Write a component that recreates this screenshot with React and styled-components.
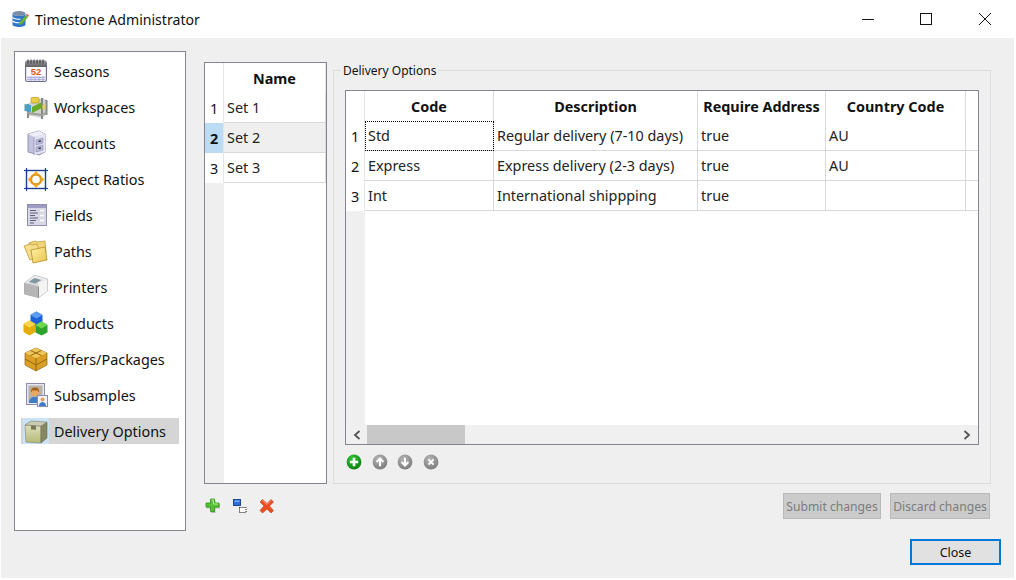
import React from "react";
import styled, { createGlobalStyle } from "styled-components";

const Global = createGlobalStyle`
  html, body { margin: 0; padding: 0; background: #fff; }
  body { font-family: "Noto Sans", "Open Sans", "Liberation Sans", sans-serif; font-size: 14.4px; color: #111; }
  * { box-sizing: border-box; }
`;

function CalendarIcon() {
  return (
    <svg width="26" height="26" viewBox="0 0 26 26">
      <defs>
        <linearGradient id="calTop" x1="0" y1="0" x2="0" y2="1">
          <stop offset="0" stopColor="#9a9a9a" />
          <stop offset="1" stopColor="#5f5f62" />
        </linearGradient>
      </defs>
      <rect x="2.5" y="3" width="21" height="20.5" rx="1.5" fill="#e3e3f2" stroke="#6f6f98" />
      <rect x="3" y="3" width="20" height="6" fill="url(#calTop)" />
      <rect x="4" y="9" width="18" height="9" fill="#fff" />
      <path d="M5 1.5v4M8 1.5v4M11 1.5v4M14 1.5v4M17 1.5v4M20 1.5v4" stroke="#333" strokeWidth="1" />
      <text x="13" y="17" textAnchor="middle" fontFamily="Liberation Sans" fontWeight="700" fontSize="9.5" fill="#e8541a">52</text>
      <path d="M4 19.5h18M4 21.5h18M8 18v5M12 18v5M16 18v5M20 18v5" stroke="#a9a9d2" strokeWidth=".8" />
    </svg>
  );
}

function WorkspaceIcon() {
  return (
    <svg width="26" height="26" viewBox="0 0 26 26">
      <path d="M4 10l15-6 5 2v14l-5 4-15-3z" fill="#cfd1cc" />
      <path d="M5 10v14M19 4v21M23.500 6v15" stroke="#858883" strokeWidth="2" />
      <path d="M4 19l15 2 5-3" stroke="#9b9e98" strokeWidth="2" fill="none" />
      <rect x="8" y="3.500" width="8" height="5.500" rx="1" fill="#e9cf45" stroke="#a88f1b" strokeWidth=".6" />
      <path d="M9 13l9-4.500v6L9 19z" fill="#68ab25" />
      <path d="M1.500 10l6.500 1v7l-6.500-1z" fill="#4a9fc4" />
      <path d="M19.500 11l3-1v5l-3 1z" fill="#e3d057" />
    </svg>
  );
}

function CabinetIcon() {
  return (
    <svg width="26" height="26" viewBox="0 0 26 26">
      <path d="M5 4l11-3 6 3v18l-6 3-11-3z" fill="#c3c3e0" stroke="#7f7fa8" strokeWidth=".8" />
      <path d="M5 4l11-3 6 3-11 3z" fill="#eeeef8" />
      <path d="M11 7l11-3v18l-11 3z" fill="#e4e4f4" />
      <path d="M13 10l7-2v5l-7 2zM13 17l7-2v5l-7 2z" fill="#bcbcdc" stroke="#8888b2" strokeWidth=".6" />
      <path d="M15.500 11.500l2.500-.7M15.500 18.500l2.500-.7" stroke="#333" strokeWidth="1.300" />
      <path d="M11 7v18" stroke="#9090b8" strokeWidth=".8" />
    </svg>
  );
}

function RatioIcon() {
  return (
    <svg width="26" height="26" viewBox="0 0 26 26">
      <rect x="3.5" y="4.5" width="19" height="18" fill="#fff" stroke="#1d3e96" strokeWidth="1.4" />
      <path d="M1 4.5h5M20 4.5h5M1 22.5h5M20 22.5h5M3.5 2v5M22.5 2v5M3.5 20v5M22.5 20v5" stroke="#1d3e96" strokeWidth="1.2" />
      <circle cx="13" cy="13.5" r="5" fill="#fff" stroke="#d99b1c" strokeWidth="2.4" />
      <path d="M13 5l3 3.4h-6zM13 22l3-3.4h-6zM4.500 13.500l3.400-3v6zM21.500 13.500l-3.400-3v6z" fill="#f0a91f" />
    </svg>
  );
}

function FieldsIcon() {
  return (
    <svg width="26" height="26" viewBox="0 0 26 26">
      <rect x="4.5" y="2.5" width="19" height="21" fill="#d7d7e6" stroke="#8e8eac" />
      <rect x="5" y="3" width="18" height="3" fill="#9c9cc4" />
      <path d="M7 8.500h6M7 11h8M7 13.500h5M7 16h8M7 18.500h6M7 21h4" stroke="#62627a" strokeWidth="1.100" />
      <path d="M17 8.500h4M17 13.500h4M17 18.500h4" stroke="#fff" strokeWidth="1.400" />
    </svg>
  );
}

function FolderIcon() {
  return (
    <svg width="26" height="26" viewBox="0 0 26 26">
      <defs>
        <linearGradient id="folder" x1="0" y1="0" x2="1" y2="1">
          <stop offset="0" stopColor="#fff3a8" />
          <stop offset="1" stopColor="#e8c24a" />
        </linearGradient>
      </defs>
      <path d="M6 5l6-2 2 1 8-1 1 12-14 2z" fill="#f1d677" stroke="#b8922c" strokeWidth=".7" />
      <path d="M1 8l6-2 2 1 5-1 4 13-11 3z" fill="#f4de8b" stroke="#b8922c" strokeWidth=".7" />
      <path d="M8 12l14-3 2 13-14 3z" fill="url(#folder)" stroke="#b38b24" strokeWidth=".8" />
    </svg>
  );
}

function PrinterIcon() {
  return (
    <svg width="26" height="26" viewBox="0 0 26 26">
      <path d="M1.500 9l10-7.500 13 3.500v12l-9 6.500-14-3.500z" fill="#d9d9d9" stroke="#8f8f8f" strokeWidth=".7" />
      <path d="M15.500 9l9-4v12l-9 6.500z" fill="#f4f4f4" />
      <path d="M1.500 9l14 3.500v11l-14-3.500z" fill="#b5b5b5" />
      <path d="M1.500 9l10-7.500 13 3.500-9 4z" fill="#ececec" />
      <path d="M5.500 8l6-4 7 2-6 3.500z" fill="#7f97a0" />
      <path d="M15.500 12.500v11" stroke="#7e7e7e" strokeWidth=".8" />
    </svg>
  );
}

function ProductsIcon() {
  return (
    <svg width="26" height="26" viewBox="0 0 26 26">
      <path d="M7.500 5l6-3.500 6 3.500v8l-6 3.500-6-3.500z" fill="#1f62d8" />
      <path d="M7.500 5l6 3.500 6-3.500-6-3.500z" fill="#5d9df0" />
      <path d="M0.500 14l6-3.500 6 3.500v8l-6 3.500-6-3.500z" fill="#e6ac0c" />
      <path d="M0.500 14l6 3.500 6-3.500-6-3.500z" fill="#fbd64a" />
      <path d="M12.500 15l6-3.500 6 3.500v7.500l-6 3-6-3z" fill="#2da32d" />
      <path d="M12.500 15l6 3.500 6-3.500-6-3.500z" fill="#70d850" />
    </svg>
  );
}

function PackageIcon() {
  return (
    <svg width="26" height="26" viewBox="0 0 26 26">
      <path d="M2 7l11-5 11 5v12l-11 6-11-6z" fill="#d89f24" stroke="#94680f" strokeWidth=".7" />
      <path d="M2 7l11 5 11-5-11-5z" fill="#f0c65a" />
      <path d="M13 12v13M7.500 4.500l11 5M18.500 4.500l-11 5M2 13l11 6 11-6" stroke="#94680f" strokeWidth="1" fill="none" />
    </svg>
  );
}

function SubsampleIcon() {
  return (
    <svg width="26" height="26" viewBox="0 0 26 26">
      <rect x="3.5" y="1.5" width="18" height="21" fill="#e6e6f2" stroke="#8c8cae" />
      <rect x="5.5" y="3.5" width="14" height="17" fill="#b8b2a4" />
      <circle cx="12" cy="10" r="4" fill="#e8a965" />
      <path d="M8 9.500a4 4 0 0 1 8 0c0 1-1 1-1-1h-6c0 2-1 2-1 1z" fill="#a55f17" />
      <path d="M6 21c0-5 3-6 6-6s6 1 6 6z" fill="#3f7cc7" />
      <rect x="14.500" y="13.500" width="10" height="11" fill="#f1f1f8" stroke="#8c8cae" />
      <circle cx="19.500" cy="17.500" r="2" fill="#e2a05c" />
      <path d="M16 24c0-3 2-4 3.500-4s3.500 1 3.500 4z" fill="#3f7cc7" />
    </svg>
  );
}

function BoxIcon() {
  return (
    <svg width="26" height="26" viewBox="0 0 26 26">
      <defs>
        <linearGradient id="boxFront" x1="0" y1="0" x2="0" y2="1">
          <stop offset="0" stopColor="#dde0bb" />
          <stop offset="1" stopColor="#b6ba78" />
        </linearGradient>
      </defs>
      <path d="M2 7l16 1v17l-15-1z" fill="url(#boxFront)" stroke="#7f8268" strokeWidth=".6" />
      <path d="M18 8l6-4v16l-6 5z" fill="#86885f" stroke="#6b6d52" strokeWidth=".6" />
      <path d="M2 7l6-4 16 1-6 4z" fill="#c9ccb0" stroke="#7f8268" strokeWidth=".6" />
      <path d="M8 7.500l5 .3v4l-5-.3z" fill="#77775c" />
    </svg>
  );
}

function AppIcon() {
  return (
    <svg width="18" height="18" viewBox="0 0 18 18">
      <ellipse cx="8" cy="3.500" rx="6.500" ry="2.500" fill="#7d8ca6" />
      <path d="M1.500 3.500v11c0 1.400 3 2.500 6.500 2.500s6.500-1.100 6.500-2.500v-11c0 1.400-3 2.500-6.500 2.500s-6.500-1.100-6.500-2.500z" fill="#2f76c9" />
      <path d="M1.500 7.500c2 1.500 5 2 8 1.500M1.500 11c2 1.500 5 2 7 1.500" stroke="#fff" strokeWidth="1.100" fill="none" />
      <path d="M8 15l1-3 6-7 2 2-6 7z" fill="#69b52f" />
      <path d="M15 5l1-1.500 2 2-1 1.500z" fill="#e0665a" />
    </svg>
  );
}

function PlusIcon() {
  return (
    <svg width="16" height="16" viewBox="0 0 16 16">
      <path d="M6 2h4.500v4H15v4.500h-4.500V15H6v-4.500H1.500V6H6z" fill="#555" opacity=".35" />
      <path d="M5.500 1h4v4h4.500v4H9.500v4.500h-4V9H1V5h4.500z" fill="#58c236" stroke="#2f9418" strokeWidth=".8" />
      <path d="M6.500 2h2v4h4.500" stroke="#b6ee98" strokeWidth="1" fill="none" />
    </svg>
  );
}

function CopyIcon() {
  return (
    <svg width="16" height="16" viewBox="0 0 16 16">
      <rect x="1.500" y="1.500" width="7" height="6" fill="#2a6fd6" stroke="#123f8c" strokeWidth=".9" />
      <rect x="2.500" y="2.500" width="5" height="1.500" fill="#78aef0" />
      <rect x="7.500" y="9.500" width="6.500" height="5" fill="#fff" stroke="#111" strokeWidth="1" strokeDasharray="1 1" />
    </svg>
  );
}

function CrossIcon() {
  return (
    <svg width="16" height="16" viewBox="0 0 16 16">
      <path d="M3.500 1.500l4.500 4 4-4 2.500 2.500-4 4 4 4.500-2.500 2.500-4-4-4.500 4L1 12.500l4-4.500-4-4z" fill="#ea4e22" stroke="#bf3c17" strokeWidth=".6" />
      <path d="M3.500 2.500l4.500 4 4-4" stroke="#f9a183" strokeWidth="1" fill="none" />
    </svg>
  );
}

function RoundIcon({ kind, green }) {
  const id = green ? "roundGreen" : "roundGrey";
  return (
    <svg width="16" height="16" viewBox="0 0 16 16">
      <defs>
        <radialGradient id={id} cx=".4" cy=".3" r=".8">
          <stop offset="0" stopColor={green ? "#38c43a" : "#b5b5b5"} />
          <stop offset="1" stopColor={green ? "#047c08" : "#767676"} />
        </radialGradient>
      </defs>
      <circle cx="8" cy="8" r="7.400" fill={`url(#${id})`} />
      {kind === "plus" && <path d="M8 3.800v8.400M3.800 8h8.400" stroke="#fff" strokeWidth="2.600" />}
      {kind === "up" && <path d="M8 12.200V5M4.600 8L8 4.400 11.400 8" stroke="#fff" strokeWidth="2" fill="none" />}
      {kind === "down" && <path d="M8 3.800V11M4.600 8L8 11.600 11.400 8" stroke="#fff" strokeWidth="2" fill="none" />}
      {kind === "x" && <path d="M5.400 5.400l5.200 5.200M10.600 5.400l-5.200 5.200" stroke="#fff" strokeWidth="2" />}
    </svg>
  );
}

const Page = styled.div`
  width: 1016px;
  height: 580px;
  display: flex;
  flex-direction: column;
  background: #fff;
  overflow: hidden;
`;

const TitleBar = styled.div`
  height: 38px;
  display: flex;
  align-items: center;
  padding-left: 11px;
  gap: 6px;
  flex: none;
`;

const TitleText = styled.div`
  font-size: 14.1px;
  flex: 1;
  color: #111;
`;

const WinControls = styled.div`
  display: flex;
  padding-right: 2px;
`;

const WinButton = styled.div`
  width: 58.5px;
  height: 38px;
  display: flex;
  align-items: center;
  justify-content: center;
`;

const Body = styled.div`
  height: 540px;
  margin: 0 2px 2px 1px;
  background: #efefef;
  display: flex;
  flex-direction: column;
  flex: none;
`;

const Content = styled.div`
  display: flex;
  height: 480px;
  margin-top: 13px;
  padding-left: 13px;
  gap: 18px;
`;

const Sidebar = styled.div`
  width: 172px;
  height: 480px;
  background: #fff;
  border: 1px solid #85858f;
  padding: 6px;
  display: flex;
  flex-direction: column;
  gap: 10px;
`;

const NavItem = styled.div`
  height: 26px;
  display: flex;
  align-items: center;
  gap: 5px;
  padding-left: 2px;
  background: ${(p) => (p.$active ? "#d5d5d5" : "transparent")};
`;

const NavIcon = styled.div`
  width: 26px;
  height: 26px;
  flex: none;
  background: ${(p) => (p.$active ? "#cbe3f7" : "transparent")};
  svg { display: block; }
`;

const RightColumn = styled.div`
  width: 787px;
  padding-top: 11px;
  display: flex;
  flex-direction: column;
`;

const TopRow = styled.div`
  display: flex;
  height: 422px;
  gap: 6px;
`;

const Frame = styled.div`
  border: 1px solid #85858f;
  background: #fff;
  display: flex;
`;

const SetFrame = styled(Frame)`
  width: 123px;
  height: 422px;
`;

const Gutter = styled.div`
  width: ${(p) => p.$w}px;
  background: #efefef;
  flex: none;
  display: flex;
  flex-direction: column;
`;

const GutterHead = styled.div`
  height: ${(p) => p.$h}px;
  background: #fff;
  border-right: 1px solid #e6e6e6;
`;

const RowNumber = styled.div`
  height: 30px;
  background: ${(p) => (p.$active ? "#bcdcf4" : "#fff")};
  font-weight: ${(p) => (p.$active ? 700 : 400)};
  border-right: 1px solid #e6e6e6;
  display: flex;
  align-items: center;
  justify-content: center;
`;

const DataColumn = styled.div`
  flex: 1;
  min-width: 0;
  display: flex;
  flex-direction: column;
`;

const HeadRow = styled.div`
  display: flex;
  height: ${(p) => p.$h}px;
  flex: none;
`;

const HeadCell = styled.div`
  width: ${(p) => p.$w}px;
  flex: none;
  font-weight: 700;
  display: flex;
  align-items: center;
  justify-content: center;
  border-right: 1px solid ${(p) => (p.$plain ? "#e6e6e6" : "#dcdcdc")};
  padding-top: 1px;
`;

const DataRow = styled.div`
  display: flex;
  height: 30px;
  flex: none;
  background: ${(p) => (p.$active ? "#efefef" : "#fff")};
`;

const Cell = styled.div`
  width: ${(p) => p.$w}px;
  flex: none;
  display: flex;
  align-items: center;
  padding-left: 3px;
  padding-bottom: 1px;
  border-right: 1px solid #d9d9d9;
  border-bottom: 1px solid #d9d9d9;
  white-space: nowrap;
  color: #222;
  outline: ${(p) => (p.$focus ? "1px dotted #000" : "none")};
  outline-offset: -1px;
`;

const RowFiller = styled.div`
  flex: 1;
  border-bottom: 1px solid #d9d9d9;
`;

const GroupColumn = styled.div`
  width: 658px;
  height: 414px;
  margin-top: 8px;
  position: relative;
  border: 1px solid #dcdcdc;
  padding: 19px 11px 0;
  display: flex;
  flex-direction: column;
`;

const Legend = styled.div`
  position: absolute;
  top: -8px;
  left: 7px;
  padding: 0 2px;
  background: #efefef;
  font-size: 12px;
  line-height: 15px;
`;

const OptionsFrame = styled(Frame)`
  width: 634px;
  height: 355px;
  flex-direction: column;
`;

const OptionsMain = styled.div`
  flex: 1;
  display: flex;
  min-height: 0;
`;

const ScrollBar = styled.div`
  height: 19px;
  flex: none;
  background: #f0f0f0;
  display: flex;
  align-items: center;
`;

const ScrollArrow = styled.div`
  width: ${(p) => p.$w}px;
  height: 19px;
  flex: none;
  display: flex;
  align-items: center;
  justify-content: center;
`;

const ScrollThumb = styled.div`
  width: 98px;
  height: 19px;
  background: #c8c8c8;
`;

const ScrollFill = styled.div`
  flex: 1;
`;

const IconRow = styled.div`
  display: flex;
  gap: ${(p) => p.$gap}px;
  align-items: center;
  svg { display: block; }
`;

const OptionTools = styled(IconRow)`
  margin-top: 9px;
  padding-left: 1px;
`;

const BottomRow = styled.div`
  display: flex;
  align-items: flex-start;
  justify-content: space-between;
  padding: 9px 1px 0 1px;
`;

const SetTools = styled(IconRow)`
  padding-top: 5px;
`;

const ActionGroup = styled.div`
  display: flex;
  gap: 9px;
`;

const GhostButton = styled.div`
  width: ${(p) => p.$w}px;
  height: 26px;
  background: #cbcbcb;
  border: 1px solid #b9b9b9;
  color: #7c7c7c;
  font-size: 12.150px;
  display: flex;
  align-items: center;
  justify-content: center;
`;

const Footer = styled.div`
  display: flex;
  justify-content: flex-end;
  margin-top: 8px;
  padding-right: 13px;
`;

const CloseButton = styled.div`
  width: 91px;
  height: 26px;
  background: #e1e1e1;
  border: 2px solid #0078d7;
  font-size: 12.500px;
  display: flex;
  align-items: center;
  justify-content: center;
`;

const navItems = [
  ["Seasons", CalendarIcon],
  ["Workspaces", WorkspaceIcon],
  ["Accounts", CabinetIcon],
  ["Aspect Ratios", RatioIcon],
  ["Fields", FieldsIcon],
  ["Paths", FolderIcon],
  ["Printers", PrinterIcon],
  ["Products", ProductsIcon],
  ["Offers/Packages", PackageIcon],
  ["Subsamples", SubsampleIcon],
  ["Delivery Options", BoxIcon],
];

const sets = ["Set 1", "Set 2", "Set 3"];

const columns = [
  ["Code", 129],
  ["Description", 204],
  ["Require Address", 128],
  ["Country Code", 140],
];

const options = [
  ["Std", "Regular delivery (7-10 days)", "true", "AU"],
  ["Express", "Express delivery (2-3 days)", "true", "AU"],
  ["Int", "International shippping", "true", ""],
];

export default function App() {
  return (
    <Page>
      <Global />
      <TitleBar>
        <AppIcon />
        <TitleText>Timestone Administrator</TitleText>
        <WinControls>
          <WinButton>
            <svg width="12" height="12" viewBox="0 0 12 12"><path d="M0 6.500h12" stroke="#111" /></svg>
          </WinButton>
          <WinButton>
            <svg width="12" height="12" viewBox="0 0 12 12"><rect x=".5" y=".5" width="11" height="11" fill="none" stroke="#111" /></svg>
          </WinButton>
          <WinButton>
            <svg width="12" height="12" viewBox="0 0 12 12"><path d="M0 0l12 12M12 0L0 12" stroke="#111" /></svg>
          </WinButton>
        </WinControls>
      </TitleBar>
      <Body>
        <Content>
          <Sidebar>
            {navItems.map(([label, Icon]) => {
              const active = label === "Delivery Options";
              return (
                <NavItem key={label} $active={active}>
                  <NavIcon $active={active}><Icon /></NavIcon>
                  {label}
                </NavItem>
              );
            })}
          </Sidebar>
          <RightColumn>
            <TopRow>
              <SetFrame>
                <Gutter $w={19}>
                  <GutterHead $h={30} />
                  {sets.map((s, i) => (
                    <RowNumber key={s} $active={i === 1}>{i + 1}</RowNumber>
                  ))}
                </Gutter>
                <DataColumn>
                  <HeadRow $h={30}>
                    <HeadCell $w={102} $plain>Name</HeadCell>
                  </HeadRow>
                  {sets.map((s, i) => (
                    <DataRow key={s} $active={i === 1}>
                      <Cell $w={102}>{s}</Cell>
                    </DataRow>
                  ))}
                </DataColumn>
              </SetFrame>
              <GroupColumn>
                <Legend>Delivery Options</Legend>
                <OptionsFrame>
                  <OptionsMain>
                    <Gutter $w={19}>
                      <GutterHead $h={30} />
                      {options.map((o, i) => (
                        <RowNumber key={o[0]}>{i + 1}</RowNumber>
                      ))}
                    </Gutter>
                    <DataColumn>
                      <HeadRow $h={30}>
                        {columns.map(([name, w]) => (
                          <HeadCell key={name} $w={w}>{name}</HeadCell>
                        ))}
                      </HeadRow>
                      {options.map((row, r) => (
                        <DataRow key={row[0]}>
                          {row.map((value, c) => (
                            <Cell key={c} $w={columns[c][1]} $focus={r === 0 && c === 0}>{value}</Cell>
                          ))}
                          <RowFiller />
                        </DataRow>
                      ))}
                    </DataColumn>
                  </OptionsMain>
                  <ScrollBar>
                    <ScrollArrow $w={21}>
                      <svg width="8" height="10" viewBox="0 0 8 10"><path d="M6.500 1L2 5l4.500 4" fill="none" stroke="#555" strokeWidth="1.800" /></svg>
                    </ScrollArrow>
                    <ScrollThumb />
                    <ScrollFill />
                    <ScrollArrow $w={22}>
                      <svg width="8" height="10" viewBox="0 0 8 10"><path d="M1.500 1L6 5 1.500 9" fill="none" stroke="#555" strokeWidth="1.800" /></svg>
                    </ScrollArrow>
                  </ScrollBar>
                </OptionsFrame>
                <OptionTools $gap={9.67}>
                  <RoundIcon kind="plus" green />
                  <RoundIcon kind="up" />
                  <RoundIcon kind="down" />
                  <RoundIcon kind="x" />
                </OptionTools>
              </GroupColumn>
            </TopRow>
            <BottomRow>
              <SetTools $gap={11}>
                <PlusIcon />
                <CopyIcon />
                <CrossIcon />
              </SetTools>
              <ActionGroup>
                <GhostButton $w={98}>Submit changes</GhostButton>
                <GhostButton $w={100}>Discard changes</GhostButton>
              </ActionGroup>
            </BottomRow>
          </RightColumn>
        </Content>
        <Footer>
          <CloseButton>Close</CloseButton>
        </Footer>
      </Body>
    </Page>
  );
}
